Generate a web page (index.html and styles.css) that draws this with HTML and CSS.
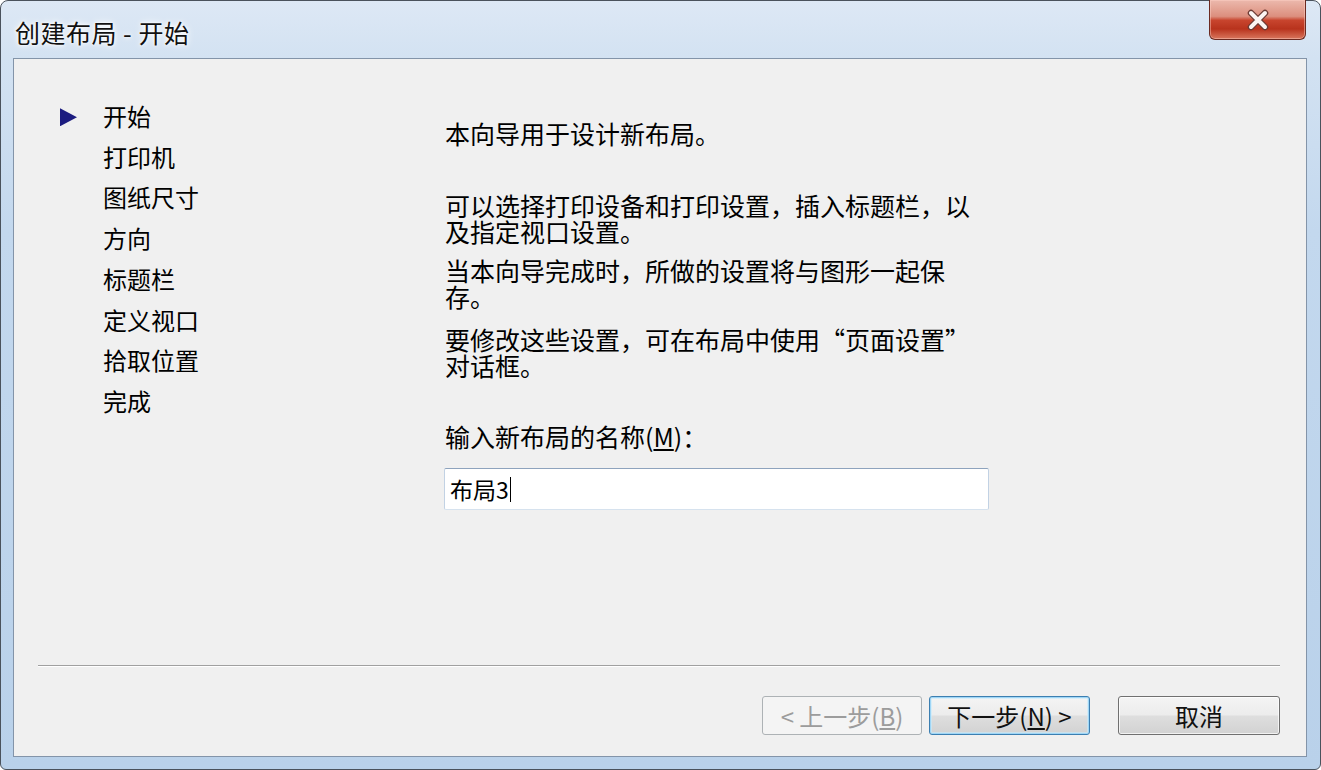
FILE: index.html
```html
<!DOCTYPE html>
<html lang="zh-CN">

<head>
  <meta charset="UTF-8">
  <meta name="viewport" content="width=device-width, initial-scale=1.0">
  <title>创建布局 - 开始</title>
  <link rel="stylesheet" href="styles.css">
</head>

<body>
  <div class="window">
    <header class="titlebar">
      <h1 class="title">创建布局 - 开始</h1>
      <button class="close" title="关闭">
        <svg width="26" height="22" viewBox="0 0 26 22">
          <path d="M6 4 L20 18 M20 4 L6 18" stroke="#6a3a34" stroke-width="6.5" stroke-linecap="round" />
          <path d="M6 4 L20 18 M20 4 L6 18" stroke="#fbf4f2" stroke-width="4" stroke-linecap="round" />
        </svg>
      </button>
    </header>
    <main class="client">
      <section class="wizard">
        <ul class="steps">
          <li class="step current">开始</li>
          <li class="step">打印机</li>
          <li class="step">图纸尺寸</li>
          <li class="step">方向</li>
          <li class="step">标题栏</li>
          <li class="step">定义视口</li>
          <li class="step">拾取位置</li>
          <li class="step">完成</li>
        </ul>
        <div class="page">
          <p class="intro">本向导用于设计新布局。</p>
          <p class="note first">可以选择打印设备和打印设置，插入标题栏，以<br>及指定视口设置。</p>
          <p class="note">当本向导完成时，所做的设置将与图形一起保<br>存。</p>
          <p class="note last">要修改这些设置，可在布局中使用“页面设置”<br>对话框。</p>
          <label class="name-label">输入新布局的名称(<u>M</u>)：</label>
          <div class="name-input">布局3<span class="caret"></span></div>
        </div>
      </section>
      <footer class="footer">
        <hr>
        <div class="buttons">
          <button class="btn" disabled>&lt; 上一步(<u>B</u>)</button>
          <button class="btn default">下一步(<u>N</u>) &gt;</button>
          <button class="btn cancel">取消</button>
        </div>
      </footer>
    </main>
  </div>
</body>

</html>
```

FILE: styles.css
```css
html {
  box-sizing: border-box;
  font-family: "Noto Sans CJK SC", "Microsoft YaHei", sans-serif;
  font-size: 24px;
}

*,
*:after,
*:before {
  box-sizing: inherit;
}

body {
  margin: 0;
  background-color: #fff;
}

/* window frame */
.window {
  display: flex;
  flex-direction: column;
  width: 1321px;
  height: 770px;
  padding: 0 13px 12px 12px;
  border: 1px solid #4a525c;
  border-radius: 8px 8px 6px 6px;
  background: linear-gradient(180deg, #dde8f5 0, #d3e2f2 57px, #c3d8ee 230px, #b9d1ea 100%);
}

.titlebar {
  display: flex;
  justify-content: space-between;
  align-items: flex-start;
  height: 57px;
  flex-shrink: 0;
}

.title {
  margin: 0;
  padding: 16px 0 0 2px;
  font-size: 25px;
  font-weight: normal;
  letter-spacing: .5px;
  line-height: 30px;
  color: #111;
  text-shadow: 0 0 8px #fff, 0 0 4px #fff, 0 0 2px #fff;
}

.close {
  display: flex;
  align-items: center;
  justify-content: center;
  width: 97px;
  height: 40px;
  margin: -1px 1px 0 0;
  padding: 0;
  border: 1px solid #6b2a21;
  border-top: none;
  border-radius: 0 0 6px 6px;
  background: linear-gradient(180deg, #ecb9ad 0%, #dc8f7e 42%, #c8452e 52%, #b8331d 74%, #d9765d 100%);
  box-shadow: inset 0 0 0 1px rgba(255, 210, 200, .45);
}

/* client area */
.client {
  display: flex;
  flex-direction: column;
  flex: 1;
  border: 1px solid #8394a9;
  background-color: #f0f0f0;
  color: #000;
}

.wizard {
  display: flex;
  flex: 1;
}

.steps {
  width: 431px;
  margin: 0;
  padding: 37px 0 0 46px;
  list-style: none;
  line-height: 40.7px;
  flex-shrink: 0;
}

.step {
  display: flex;
  align-items: center;
}

.step:before {
  content: "";
  width: 17px;
  height: 18px;
  margin: 2px 26px 0 0;
}

.step.current:before {
  background-color: #1c1c80;
  clip-path: polygon(0 0, 100% 50%, 0 100%);
}

.page {
  display: flex;
  flex-direction: column;
  align-items: flex-start;
  padding-top: 61px;
  font-size: 25px;
  line-height: 26px;
}

.page p {
  margin: 0;
}

.note {
  margin-top: 13px !important;
}

.note.first {
  margin-top: 46px !important;
}

.note.last {
  margin-top: 17px !important;
}

.name-label {
  margin-top: 45px;
}

.name-input {
  display: flex;
  align-items: center;
  width: 545px;
  height: 42px;
  margin: 19px 0 0 -1px;
  padding-left: 5px;
  border: 1px solid;
  border-color: #8ea3bd #c2d2e4 #d6e2ee #c2d2e4;
  border-radius: 2px;
  background-color: #fff;
  font-size: 23px;
}

.caret {
  width: 1px;
  height: 25px;
  margin-left: 1px;
  background-color: #000;
}

/* bottom buttons */
.footer {
  padding: 0 26px 21px 24px;
}

hr {
  margin: 0 0 29px;
  border: none;
  border-top: 1px solid #a0a0a0;
  border-bottom: 1px solid #fff;
}

.buttons {
  display: flex;
  justify-content: flex-end;
  gap: 7px;
}

.btn {
  height: 39px;
  width: 161px;
  padding: 0;
  border: 1px solid #707070;
  border-radius: 3px;
  font-family: inherit;
  font-size: 24px;
  line-height: 1;
  color: #111;
  background: linear-gradient(180deg, #f4f4f4 0%, #ececec 48%, #dedede 52%, #d2d2d2 100%);
  box-shadow: inset 0 0 0 1px rgba(255, 255, 255, .7);
}

.btn:disabled {
  width: 160px;
  border-color: #adb2b5;
  color: #9c9c9c;
  background: #f4f4f4;
  box-shadow: none;
}

.btn.default {
  border-color: #3c7fb1;
  box-shadow: inset 0 0 0 1px #9fd6f6, inset 0 0 0 2px rgba(200, 235, 252, .6);
}

.btn.cancel {
  width: 162px;
  margin-left: 21px;
}
```
